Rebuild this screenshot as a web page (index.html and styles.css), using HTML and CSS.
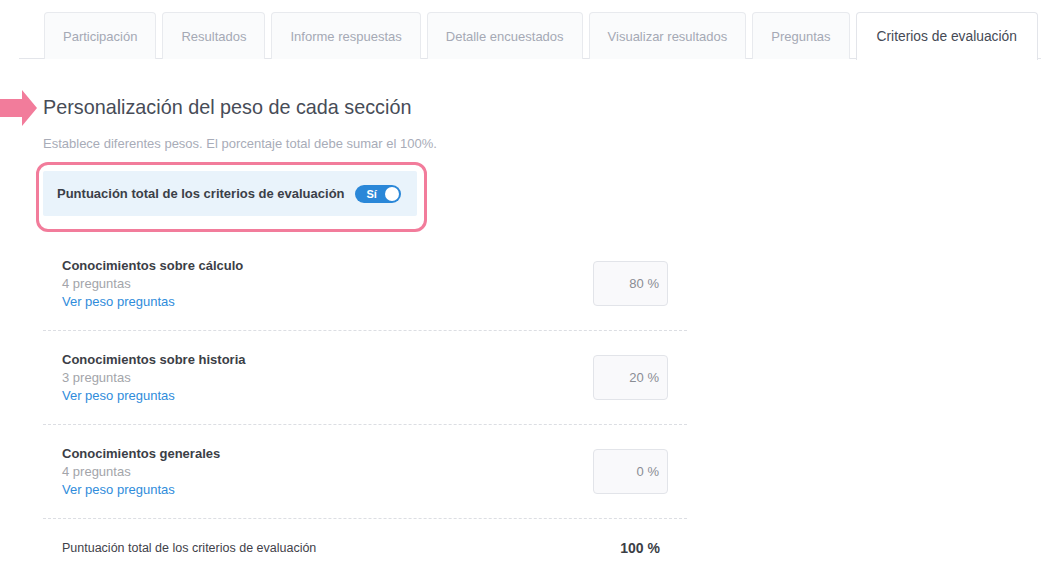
FILE: index.html
```html
<!DOCTYPE html>
<html lang="es">
<head>
<meta charset="utf-8">
<title>Criterios de evaluación</title>
<link rel="stylesheet" href="styles.css">
</head>
<body>
<div class="page">
  <nav class="tabs">
    <div class="tab">Participación</div>
    <div class="tab">Resultados</div>
    <div class="tab">Informe respuestas</div>
    <div class="tab">Detalle encuestados</div>
    <div class="tab">Visualizar resultados</div>
    <div class="tab">Preguntas</div>
    <div class="tab active">Criterios de evaluación</div>
  </nav>

  <main class="content">
    <svg class="arrow" width="38" height="36" viewBox="0 0 38 36"><path d="M0 9 H22 V0 L37 18 L22 36 V27 H0 Z" fill="#f27c9b"/></svg>
    <h1 class="title">Personalización del peso de cada sección</h1>
    <p class="subtitle">Establece diferentes pesos. El porcentaje total debe sumar el 100%.</p>

    <div class="highlight">
      <div class="toggle-box">
        <span class="toggle-label">Puntuación total de los criterios de evaluación</span>
        <span class="switch"><span class="switch-text">Sí</span><span class="knob"></span></span>
      </div>
    </div>

    <div class="sections">
      <div class="row">
        <div class="info">
          <div class="name">Conocimientos sobre cálculo</div>
          <div class="count">4 preguntas</div>
          <a class="link" href="#">Ver peso preguntas</a>
        </div>
        <div class="weight">80 %</div>
      </div>
      <div class="row">
        <div class="info">
          <div class="name">Conocimientos sobre historia</div>
          <div class="count">3 preguntas</div>
          <a class="link" href="#">Ver peso preguntas</a>
        </div>
        <div class="weight">20 %</div>
      </div>
      <div class="row">
        <div class="info">
          <div class="name">Conocimientos generales</div>
          <div class="count">4 preguntas</div>
          <a class="link" href="#">Ver peso preguntas</a>
        </div>
        <div class="weight">0 %</div>
      </div>
      <div class="total">
        <span class="total-label">Puntuación total de los criterios de evaluación</span>
        <span class="total-value">100 %</span>
      </div>
    </div>
  </main>
</div>
</body>
</html>
```

FILE: styles.css
```css
* { box-sizing: border-box; }
html, body { margin: 0; padding: 0; background: #fff; }
body {
  font-family: "Liberation Sans", Arial, sans-serif;
  color: #3c4049;
  width: 1041px;
  height: 587px;
  overflow: hidden;
}
.page { padding-top: 12px; }

.tabs {
  display: flex;
  gap: 6px;
  margin-left: 19px;
  padding-left: 25px;
  border-bottom: 1px solid #e3e5ea;
  height: 47px;
}
.tab {
  height: 47px;
  padding: 0 18px;
  display: flex;
  align-items: center;
  white-space: nowrap;
  flex: none;
  font-size: 13px;
  color: #a5a9b5;
  background: #fafbfc;
  border: 1px solid #e8eaee;
  border-bottom: none;
  border-radius: 4px 4px 0 0;
}
.tab.active {
  background: #fff;
  color: #454a55;
  border-color: #e3e5ea;
  height: 48px;
  padding: 0 20px;
  font-size: 13.8px;
}

.content {
  position: relative;
  padding-left: 43px;
  padding-top: 36px;
}
.arrow {
  position: absolute;
  left: 0;
  top: 31px;
}
.title {
  margin: 0;
  font-size: 19.8px;
  font-weight: normal;
  color: #474c57;
  line-height: 24px;
}
.subtitle {
  margin: 17px 0 0;
  font-size: 13px;
  color: #a8acb8;
  line-height: 16px;
}

.highlight {
  margin: 10px 0 0 -7px;
  width: 391px;
  border: 3px solid #f27c9b;
  border-radius: 12px;
  padding: 6px 7px 13px 4px;
}
.toggle-box {
  background: #e9f3fb;
  height: 45px;
  display: flex;
  align-items: center;
  padding-left: 14px;
  gap: 10px;
  border-radius: 2px;
}
.toggle-label {
  font-size: 13px;
  font-weight: bold;
  color: #3b3f48;
}
.switch {
  position: relative;
  width: 46px;
  height: 18px;
  border-radius: 9px;
  background: #2a87d8;
  display: flex;
  align-items: center;
  padding-left: 12px;
}
.switch-text {
  color: #fff;
  font-size: 11px;
  font-weight: bold;
}
.knob {
  position: absolute;
  right: 2px;
  top: 2px;
  width: 14px;
  height: 14px;
  border-radius: 50%;
  background: #fff;
}

.sections {
  margin-top: 5px;
  width: 644px;
}
.row {
  height: 94px;
  display: flex;
  align-items: center;
  justify-content: space-between;
  padding: 0 19px;
  border-bottom: 1px dashed #dcdee3;
}
.info { line-height: 18px; font-size: 13px; }
.name { font-weight: bold; color: #3b3e46; }
.count { color: #a3a5aa; }
.link { color: #2f8cdb; text-decoration: none; display: block; }
.weight {
  width: 75px;
  height: 45px;
  border: 1px solid #e2e4e9;
  border-radius: 4px;
  background: #f9f9fb;
  display: flex;
  align-items: center;
  justify-content: flex-end;
  padding-right: 8px;
  font-size: 13px;
  color: #8a8d94;
}
.total {
  display: flex;
  justify-content: space-between;
  align-items: center;
  padding: 21px 27px 0 19px;
}
.total-label { font-size: 12.5px; color: #3f424a; }
.total-value { font-size: 14px; font-weight: bold; color: #3b3e46; }
```
